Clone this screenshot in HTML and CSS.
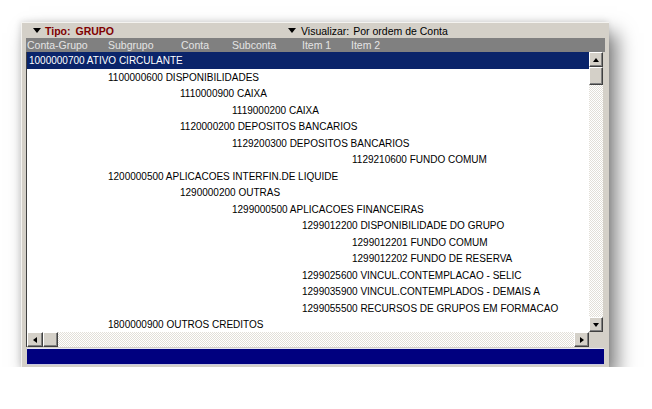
FILE: index.html
```html
<!DOCTYPE html>
<html>
<head>
<meta charset="utf-8">
<link rel="stylesheet" href="styles.css">
</head>
<body>
<div class="window">
  <div class="topbar">
    <div class="tipo"><span class="tri"></span><span class="lbl">Tipo:</span><span class="val">GRUPO</span></div>
    <div class="vis"><span class="tri"></span><span>Visualizar:</span><span class="vval">Por ordem de Conta</span></div>
  </div>
  <div class="colhead">
    <span>Conta-Grupo</span><span>Subgrupo</span><span>Conta</span><span>Subconta</span><span>Item 1</span><span>Item 2</span>
  </div>
  <div class="main">
    <div class="rows">
      <div class="row l0 sel">1000000700 ATIVO CIRCULANTE</div>
      <div class="row l1">1100000600 DISPONIBILIDADES</div>
      <div class="row l2">1110000900 CAIXA</div>
      <div class="row l3">1119000200 CAIXA</div>
      <div class="row l2">1120000200 DEPOSITOS BANCARIOS</div>
      <div class="row l3">1129200300 DEPOSITOS BANCARIOS</div>
      <div class="row l5">1129210600 FUNDO COMUM</div>
      <div class="row l1">1200000500 APLICACOES INTERFIN.DE LIQUIDE</div>
      <div class="row l2">1290000200 OUTRAS</div>
      <div class="row l3">1299000500 APLICACOES FINANCEIRAS</div>
      <div class="row l4">1299012200 DISPONIBILIDADE DO GRUPO</div>
      <div class="row l5">1299012201 FUNDO COMUM</div>
      <div class="row l5">1299012202 FUNDO DE RESERVA</div>
      <div class="row l4">1299025600 VINCUL.CONTEMPLACAO - SELIC</div>
      <div class="row l4">1299035900 VINCUL.CONTEMPLADOS - DEMAIS A</div>
      <div class="row l4">1299055500 RECURSOS DE GRUPOS EM FORMACAO</div>
      <div class="row l1">1800000900 OUTROS CREDITOS</div>
    </div>
    <div class="vscroll">
      <div class="btn vbtn"><span class="arr up"></span></div>
      <div class="vthumb"></div>
      <div class="track"></div>
      <div class="btn vbtn"><span class="arr down"></span></div>
    </div>
  </div>
  <div class="hbar">
    <div class="btn hbtn first"><span class="arr left"></span></div>
    <div class="hthumb"></div>
    <div class="track"></div>
    <div class="btn hbtn"><span class="arr right"></span></div>
    <div class="corner"></div>
  </div>
  <div class="status"></div>
</div>
</body>
</html>
```
FILE: styles.css
```css
html, body {
  margin: 0;
  background: #ffffff;
}
body {
  padding: 22px 0 0 21px;
  font-family: "Liberation Sans", Arial, sans-serif;
}
.window {
  width: 588px;
  height: 345px;
  box-sizing: border-box;
  background: #d4d0c8;
  border-left: 1px solid #f4f3f0;
  border-top: 1px solid #f4f3f0;
  padding: 0 4px 0 4px;
  display: flex;
  flex-direction: column;
  box-shadow: 8px 11px 18px rgba(0, 0, 0, 0.5), -1px -1px 6px rgba(0, 0, 0, 0.12);
}
.topbar {
  height: 15px;
  display: flex;
  align-items: center;
  font-size: 10.5px;
  color: #000;
}
.tri {
  display: inline-block;
  width: 0;
  height: 0;
  border-left: 4px solid transparent;
  border-right: 4px solid transparent;
  border-top: 5px solid #000;
  margin-right: 4px;
}
.tipo {
  display: flex;
  align-items: center;
  padding-left: 7px;
  width: 255px;
  font-weight: bold;
  color: #800000;
}
.tipo .val {
  margin-left: 5px;
}
.vis {
  display: flex;
  align-items: center;
}
.vis .tri {
  margin-right: 5px;
}
.vval {
  margin-left: 4px;
}
.colhead {
  height: 14px;
  background: #808080;
  color: #e4e4e4;
  font-size: 10.5px;
  line-height: 14px;
  display: grid;
  grid-template-columns: 81px 73px 51px 70px 49px 1fr;
  padding-left: 1px;
}
.main {
  height: 280px;
  display: flex;
  border-left: 1px solid #404040;
  padding-right: 2px;
}
.rows {
  width: 562px;
  background: #ffffff;
  overflow: hidden;
}
.row {
  height: 16.5px;
  line-height: 17px;
  font-size: 10px;
  color: #000;
  white-space: nowrap;
}
.row.sel {
  background: #0a246a;
  color: #ffffff;
}
.l0 { padding-left: 2px; }
.l1 { padding-left: 81px; }
.l2 { padding-left: 153px; }
.l3 { padding-left: 205px; }
.l4 { padding-left: 275px; }
.l5 { padding-left: 325px; }
.vscroll {
  width: 14px;
  display: flex;
  flex-direction: column;
}
.btn {
  box-sizing: border-box;
  background: #d4d0c8;
  border-top: 1px solid #ffffff;
  border-left: 1px solid #ffffff;
  border-right: 1px solid #404040;
  border-bottom: 1px solid #404040;
  box-shadow: inset -1px -1px 0 #808080;
  display: flex;
  align-items: center;
  justify-content: center;
}
.vbtn {
  height: 15px;
}
.vthumb {
  height: 18px;
  box-sizing: border-box;
  background: #d4d0c8;
  border-top: 1px solid #ffffff;
  border-left: 1px solid #ffffff;
  border-right: 1px solid #404040;
  border-bottom: 1px solid #404040;
  box-shadow: inset -1px -1px 0 #808080;
}
.track {
  flex: 1;
  background-color: #eeece8;
  background-image: conic-gradient(#ffffff 25%, #e2dfd8 0 50%, #ffffff 0 75%, #e2dfd8 0);
  background-size: 2px 2px;
}
.arr {
  width: 0;
  height: 0;
}
.arr.up {
  border-left: 3.5px solid transparent;
  border-right: 3.5px solid transparent;
  border-bottom: 4px solid #000;
}
.arr.down {
  border-left: 3.5px solid transparent;
  border-right: 3.5px solid transparent;
  border-top: 4px solid #000;
}
.arr.left {
  border-top: 3.5px solid transparent;
  border-bottom: 3.5px solid transparent;
  border-right: 4px solid #000;
}
.arr.right {
  border-top: 3.5px solid transparent;
  border-bottom: 3.5px solid transparent;
  border-left: 4px solid #000;
}
.hbar {
  height: 15px;
  display: flex;
  border-left: 1px solid #404040;
}
.hbtn {
  width: 15px;
}
.hbtn.first {
  width: 16px;
}
.hthumb {
  width: 15px;
  box-sizing: border-box;
  background: #d4d0c8;
  border-top: 1px solid #ffffff;
  border-left: 1px solid #ffffff;
  border-right: 1px solid #404040;
  border-bottom: 1px solid #404040;
  box-shadow: inset -1px -1px 0 #808080;
}
.corner {
  width: 16px;
  background: #d4d0c8;
}
.status {
  height: 17px;
  margin-top: 1px;
  margin-left: 1px;
  margin-right: 1px;
  box-sizing: border-box;
  background: #00007f;
  border-top: 1px solid #e6e6f2;
  border-bottom: 1px solid #c8c8e0;
}
```
